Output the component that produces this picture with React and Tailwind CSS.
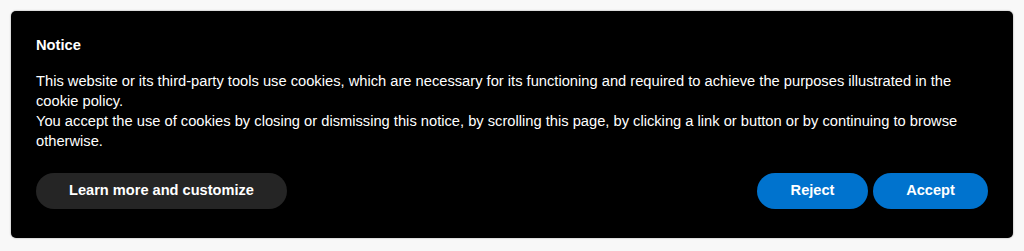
export default function App() {
  return (
    <div className="min-h-screen bg-[#f8f8f8] p-[11px] font-['Liberation_Sans',Arial,sans-serif]">
      <div className="rounded-[5px] bg-black px-[25px] pt-[24px] pb-[29px] text-white shadow-[0_0_2px_rgba(0,0,0,0.4)]">
        <h3 className="text-[14.7px] font-bold leading-[20px]">Notice</h3>
        <div className="mt-[16px] text-[14.7px] leading-[20px]">
          <p>
            This website or its third-party tools use cookies, which are necessary for its functioning and required to achieve the purposes illustrated in the cookie policy.
          </p>
          <p>
            You accept the use of cookies by closing or dismissing this notice, by scrolling this page, by clicking a link or button or by continuing to browse otherwise.
          </p>
        </div>
        <div className="mt-[22px] flex items-center justify-between">
          <button className="h-[36px] w-[251px] rounded-full bg-[#252525] text-[14.6px] font-bold text-white">
            Learn more and customize
          </button>
          <div className="flex gap-[5px]">
            <button className="h-[36px] w-[111px] rounded-full bg-[#0073ce] text-[14.6px] font-bold text-white">
              Reject
            </button>
            <button className="h-[36px] w-[115px] rounded-full bg-[#0073ce] text-[14.6px] font-bold text-white">
              Accept
            </button>
          </div>
        </div>
      </div>
    </div>
  );
}
